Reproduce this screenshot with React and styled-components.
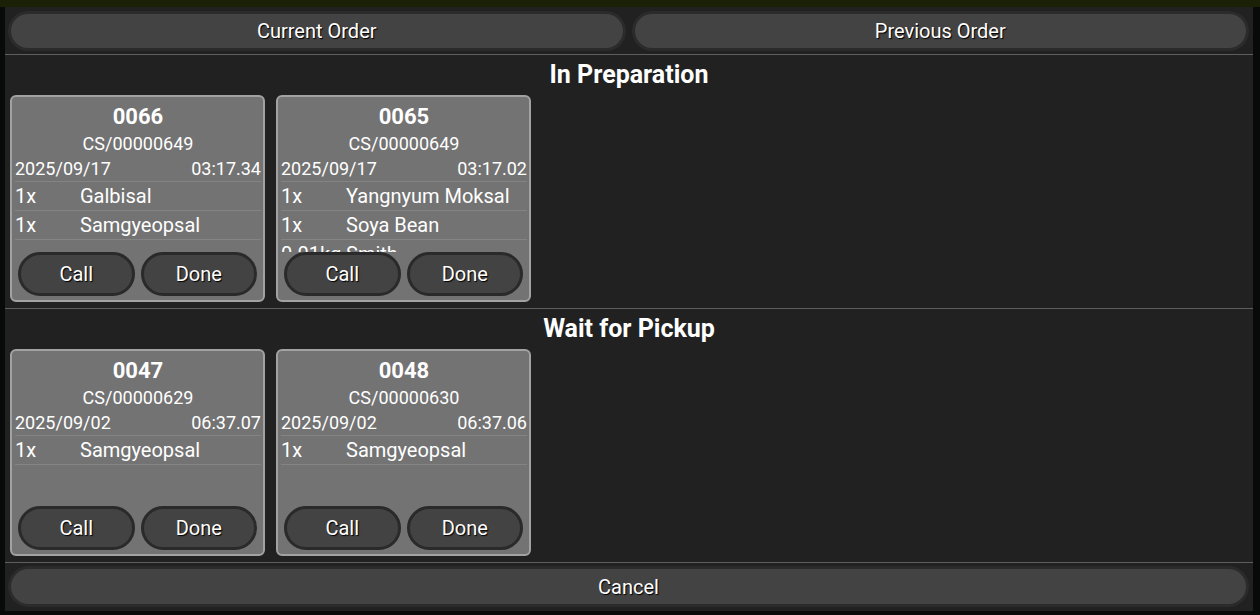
import styled, { createGlobalStyle } from 'styled-components';

const GlobalStyle = createGlobalStyle`
  html, body {
    margin: 0;
    padding: 0;
    background: #070a09;
    font-family: Roboto, "Liberation Sans", sans-serif;
    overflow: hidden;
  }
`;

const Screen = styled.div`
  width: 1260px;
  height: 615px;
  display: flex;
  flex-direction: column;
  background: linear-gradient(#1a2106 0 7px, #070a09 7px);
`;

const Dialog = styled.div`
  margin: 7px 7px 4px 5px;
  flex: 1;
  display: flex;
  flex-direction: column;
  background: #212121;
  color: #fff;
`;

const TabBar = styled.div`
  display: grid;
  grid-template-columns: 1fr 1fr;
  gap: 12px;
  padding: 7px 7px 6px 6px;
  border-bottom: 1px solid #5e5e5e;
`;

const PillButton = styled.button`
  height: ${(p) => p.$h || 34}px;
  border: 0;
  border-radius: 999px;
  background: #434343;
  box-shadow: 0 0 0 3px #2b2b2b;
  color: #fff;
  font-family: inherit;
  font-size: 20px;
  text-shadow: 1px 1px 1px #000;
  padding: 0;
`;

const Section = styled.section`
  flex: 1;
  display: flex;
  flex-direction: column;
  padding: 0 5px 6px;
  border-bottom: 1px solid #5e5e5e;
`;

const Heading = styled.h2`
  margin: 0 0 2px;
  padding-top: 2px;
  height: 36px;
  line-height: 36px;
  text-align: center;
  font-size: 25px;
  font-weight: 700;
`;

const CardRow = styled.div`
  display: flex;
  gap: 11px;
`;

const Card = styled.div`
  width: 255px;
  height: 207px;
  box-sizing: border-box;
  border: 2px solid #a2a2a2;
  border-radius: 6px;
  background: #737373;
  display: flex;
  flex-direction: column;
  padding: 8px 2px 4px 3px;
`;

const OrderNo = styled.div`
  text-align: center;
  font-size: 22px;
  font-weight: 700;
  line-height: 24px;
`;

const Receipt = styled.div`
  text-align: center;
  font-size: 18px;
  line-height: 24px;
  margin-top: 3px;
`;

const DateRow = styled.div`
  display: flex;
  justify-content: space-between;
  font-size: 18px;
  line-height: 25px;
  border-bottom: 1px solid #848484;
`;

const Items = styled.div`
  flex: 1;
  overflow: hidden;
`;

const ItemRow = styled.div`
  display: grid;
  grid-template-columns: 65px 1fr;
  font-size: 20px;
  line-height: 28px;
  border-bottom: 1px solid #848484;
  white-space: nowrap;
`;

const Actions = styled.div`
  display: grid;
  grid-template-columns: 1fr 1fr;
  gap: 6px;
  padding: 0 4px 0 3px;
`;

const ActionButton = styled(PillButton)`
  height: 44px;
  box-shadow: none;
  border: 3px solid #2a2a2a;
`;

const Footer = styled.div`
  padding: 6px 7px 7px 6px;
  display: flex;
  flex-direction: column;
`;

const preparing = [
  {
    no: '0066',
    cs: 'CS/00000649',
    date: '2025/09/17',
    time: '03:17.34',
    items: [
      ['1x', 'Galbisal'],
      ['1x', 'Samgyeopsal'],
    ],
  },
  {
    no: '0065',
    cs: 'CS/00000649',
    date: '2025/09/17',
    time: '03:17.02',
    items: [
      ['1x', 'Yangnyum Moksal'],
      ['1x', 'Soya Bean'],
      ['0.01kg', 'Smith'],
    ],
  },
];

const pickup = [
  {
    no: '0047',
    cs: 'CS/00000629',
    date: '2025/09/02',
    time: '06:37.07',
    items: [['1x', 'Samgyeopsal']],
  },
  {
    no: '0048',
    cs: 'CS/00000630',
    date: '2025/09/02',
    time: '06:37.06',
    items: [['1x', 'Samgyeopsal']],
  },
];

function OrderCard({ order }) {
  return (
    <Card>
      <OrderNo>{order.no}</OrderNo>
      <Receipt>{order.cs}</Receipt>
      <DateRow>
        <span>{order.date}</span>
        <span>{order.time}</span>
      </DateRow>
      <Items>
        {order.items.map(([qty, name], i) => (
          <ItemRow key={i}>
            <span>{qty}</span>
            <span>{name}</span>
          </ItemRow>
        ))}
      </Items>
      <Actions>
        <ActionButton>Call</ActionButton>
        <ActionButton>Done</ActionButton>
      </Actions>
    </Card>
  );
}

function OrderSection({ title, orders }) {
  return (
    <Section>
      <Heading>{title}</Heading>
      <CardRow>
        {orders.map((o) => (
          <OrderCard key={o.no} order={o} />
        ))}
      </CardRow>
    </Section>
  );
}

export default function App() {
  return (
    <Screen>
      <GlobalStyle />
      <Dialog>
        <TabBar>
          <PillButton>Current Order</PillButton>
          <PillButton>Previous Order</PillButton>
        </TabBar>
        <OrderSection title="In Preparation" orders={preparing} />
        <OrderSection title="Wait for Pickup" orders={pickup} />
        <Footer>
          <PillButton $h={35}>Cancel</PillButton>
        </Footer>
      </Dialog>
    </Screen>
  );
}
